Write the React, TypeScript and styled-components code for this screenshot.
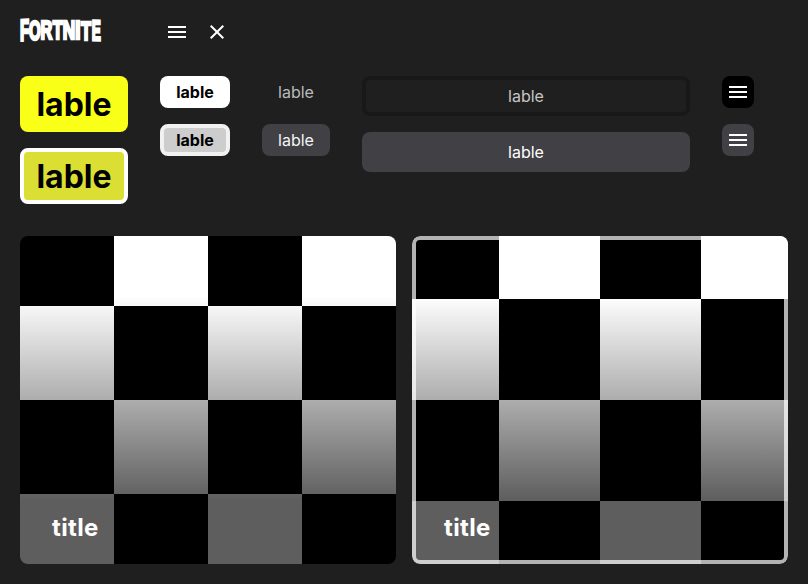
import React from "react";
import styled, { createGlobalStyle, css } from "styled-components";

const GlobalStyle = createGlobalStyle`
  *, *::before, *::after { box-sizing: border-box; }
  body {
    margin: 0;
    background: #1f1f1f;
    color: #fff;
    font-family: Inter, "Liberation Sans", sans-serif;
  }
  button { font: inherit; margin: 0; }
`;

const Page = styled.main`
  width: 808px;
  height: 584px;
  padding: 16px 20px 20px;
  overflow: hidden;
`;

const Header = styled.header`
  display: flex;
  align-items: center;
  height: 32px;
`;

const LogoArt = styled.svg`
  display: block;
  width: 82px;
  height: 24px;
  margin: 0 59px 2px 0;
  overflow: visible;
`;

const HeaderIcons = styled.div`
  display: flex;
  gap: 8px;
`;

const IconBox = styled.span`
  display: grid;
  place-items: center;
  width: 32px;
  height: 32px;
`;

const Glyph = styled.svg`
  display: block;
  width: 24px;
  height: 24px;
`;

const Samples = styled.section`
  display: flex;
  align-items: flex-start;
  gap: 32px;
  margin-top: 28px;
  height: 128px;
`;

const Stack = styled.div`
  display: flex;
  flex-direction: column;
  gap: 16px;
`;

const baseButton = css`
  display: flex;
  align-items: center;
  justify-content: center;
  padding: 0;
  border: 0 solid transparent;
  border-radius: 8px;
  white-space: nowrap;
`;

const PrimaryButton = styled.button<{ $active?: boolean }>`
  ${baseButton}
  width: 108px;
  height: 56px;
  color: #000;
  font-size: 32px;
  font-weight: 700;
  background: ${(p) => (p.$active ? "#dbdf34" : "#faff17")};
  border: ${(p) => (p.$active ? "4px solid #fff" : "0")};
`;

const SecondaryButton = styled.button<{ $active?: boolean }>`
  ${baseButton}
  width: 70px;
  height: 32px;
  color: #000;
  font-size: 16px;
  font-weight: 700;
  background: ${(p) => (p.$active ? "#cdcdcd" : "#fff")};
  border: ${(p) => (p.$active ? "4px solid #f1f1f1" : "0")};
`;

const TextButton = styled.button<{ $active?: boolean }>`
  ${baseButton}
  width: 68px;
  height: 32px;
  font-size: 16px;
  font-weight: 400;
  color: ${(p) => (p.$active ? "#f4f4f4" : "#bababa")};
  background: ${(p) => (p.$active ? "#414045" : "transparent")};
`;

const WideButton = styled.button<{ $active?: boolean }>`
  ${baseButton}
  width: 328px;
  height: 40px;
  font-size: 16px;
  font-weight: 400;
  color: ${(p) => (p.$active ? "#fff" : "#c6c6c6")};
  background: ${(p) => (p.$active ? "#414045" : "transparent")};
  border: ${(p) => (p.$active ? "0" : "4px solid #18181b")};
`;

const SquareButton = styled.button<{ $active?: boolean }>`
  ${baseButton}
  width: 32px;
  height: 32px;
  color: #fff;
  background: ${(p) => (p.$active ? "#414045" : "#000")};
`;

const Cards = styled.section`
  display: grid;
  grid-template-columns: 376px 376px;
  gap: 16px;
  margin-top: 32px;
`;

const Card = styled.article<{ $active?: boolean }>`
  display: grid;
  height: 328px;
  border-radius: 8px;
  overflow: hidden;
  background-image:
    linear-gradient(180deg, rgba(0, 0, 0, 0) 60px, rgba(0, 0, 0, 0.63) 264px),
    repeating-conic-gradient(#fff 0 25%, #000 0 50%);
  background-size: 100% 100%, ${(p) => (p.$active ? "202px 202px" : "188px 188px")};
  background-position: 0 0, ${(p) => (p.$active ? "-14px -38px" : "0 -24px")};
`;

const CardFrame = styled.div<{ $active?: boolean }>`
  display: flex;
  align-items: flex-end;
  border-radius: 8px;
  border: 4px solid ${(p) => (p.$active ? "rgba(255, 255, 255, 0.7)" : "transparent")};
  padding: 0 28px 18px;
`;

const CardTitle = styled.h2`
  margin: 0;
  font-size: 24px;
  line-height: 29px;
  font-weight: 700;
  letter-spacing: 0.35px;
`;

const MenuGlyph = () => (
  <Glyph viewBox="0 0 24 24" fill="currentColor">
    <path d="M3 18h18v-2H3v2zm0-5h18v-2H3v2zm0-7v2h18V6H3z" />
  </Glyph>
);

const CloseGlyph = () => (
  <Glyph viewBox="0 0 24 24" fill="currentColor">
    <path d="M19 6.41 17.59 5 12 10.59 6.41 5 5 6.41 10.59 12 5 17.59 6.41 19 12 13.41 17.59 19 19 17.59 13.41 12z" />
  </Glyph>
);

const letters = [
  { c: "F", x: 0, w: 9.6, top: 0, bottom: 22.8, skew: -2 },
  { c: "O", x: 8.6, w: 12.4, top: 1, bottom: 21.8, skew: 0 },
  { c: "R", x: 20.7, w: 12.6, top: 1.4, bottom: 21.3, skew: 0 },
  { c: "T", x: 32, w: 11.2, top: 1.8, bottom: 21, skew: 0 },
  { c: "N", x: 43, w: 12, top: 1.8, bottom: 21, skew: 0 },
  { c: "I", x: 55.3, w: 4.8, top: 1.8, bottom: 21.3, skew: 0 },
  { c: "T", x: 60.3, w: 11.4, top: 1.4, bottom: 21.8, skew: 0 },
  { c: "E", x: 71.6, w: 9.6, top: 0.6, bottom: 22.2, skew: 1 },
];

// Natural width of each bold capital at 100px, with its left bearing.
const metrics: Record<string, [number, number]> = {
  F: [7, 51],
  O: [4, 69],
  R: [7, 65],
  T: [2, 57],
  N: [7, 58],
  I: [7, 14],
  E: [7, 56],
};

const Logo = () => (
  <LogoArt viewBox="0 0 82 24" aria-label="Fortnite">
    {letters.map((l, i) => {
      const [bearing, width] = metrics[l.c];
      const inset = 1;
      const sx = (l.w - inset * 2) / width;
      const sy = (l.bottom - l.top - inset * 2) / 69;
      return (
        <text
          key={i}
          fontFamily="Liberation Sans"
          fontWeight={700}
          fontSize={100}
          fill="#fff"
          stroke="#fff"
          strokeWidth={2.1}
          vectorEffect="non-scaling-stroke"
          transform={`translate(${l.x + inset - bearing * sx} ${l.bottom - inset}) skewY(${l.skew}) scale(${sx} ${sy})`}
        >
          {l.c}
        </text>
      );
    })}
  </LogoArt>
);

export default function App() {
  return (
    <>
      <GlobalStyle />
      <Page>
        <Header>
          <Logo />
          <HeaderIcons>
            <IconBox><MenuGlyph /></IconBox>
            <IconBox><CloseGlyph /></IconBox>
          </HeaderIcons>
        </Header>
        <Samples>
          <Stack>
            <PrimaryButton>lable</PrimaryButton>
            <PrimaryButton $active>lable</PrimaryButton>
          </Stack>
          <Stack>
            <SecondaryButton>lable</SecondaryButton>
            <SecondaryButton $active>lable</SecondaryButton>
          </Stack>
          <Stack>
            <TextButton>lable</TextButton>
            <TextButton $active>lable</TextButton>
          </Stack>
          <Stack>
            <WideButton>lable</WideButton>
            <WideButton $active>lable</WideButton>
          </Stack>
          <Stack>
            <SquareButton aria-label="Menu"><MenuGlyph /></SquareButton>
            <SquareButton $active aria-label="Menu"><MenuGlyph /></SquareButton>
          </Stack>
        </Samples>
        <Cards>
          <Card>
            <CardFrame><CardTitle>title</CardTitle></CardFrame>
          </Card>
          <Card $active>
            <CardFrame $active><CardTitle>title</CardTitle></CardFrame>
          </Card>
        </Cards>
      </Page>
    </>
  );
}
